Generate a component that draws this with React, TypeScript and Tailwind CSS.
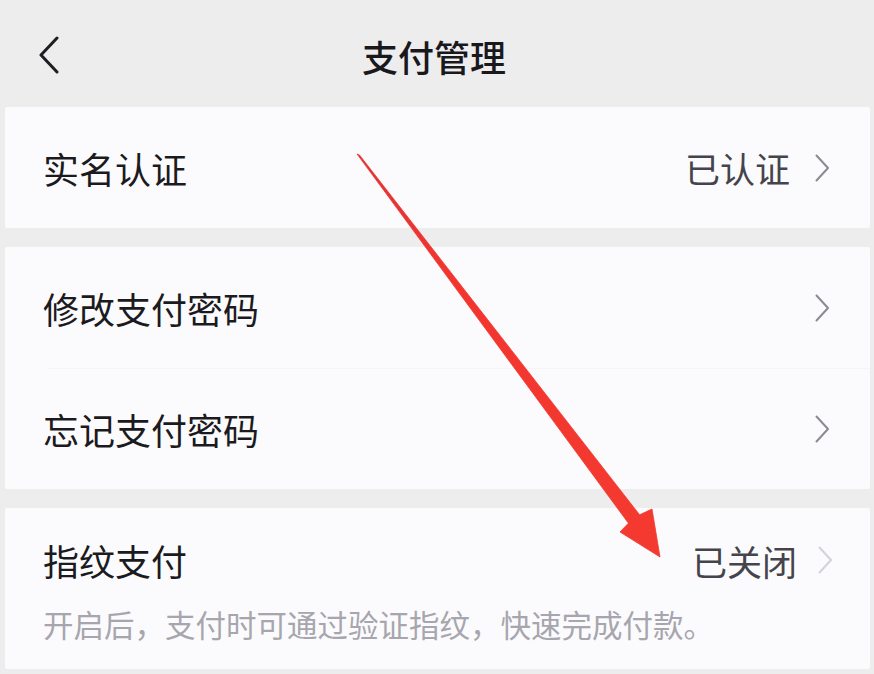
import React from "react";

const FONT = '"Noto Sans CJK SC", "Noto Sans", sans-serif';

function Chevron({ color = "#8a8a90" }: { color?: string }) {
  return (
    <svg width="15" height="28" viewBox="0 0 15 28" fill="none">
      <polyline points="1.5,1.5 13,14 1.5,26.5" stroke={color} strokeWidth="2" strokeLinecap="round" strokeLinejoin="round" />
    </svg>
  );
}

function Row({
  label,
  value,
  chevronColor,
  className = "h-[121px]",
}: {
  label: string;
  value?: string;
  chevronColor?: string;
  className?: string;
}) {
  return (
    <div className={`flex items-center pl-[38px] pr-[40px] ${className}`}>
      <span className="flex-1 text-[36px] leading-none text-[#1b1a20]">{label}</span>
      {value && <span className="text-[35px] leading-none text-[#45444c] mr-[25px]">{value}</span>}
      <Chevron color={chevronColor} />
    </div>
  );
}

export default function App() {
  return (
    <div className="relative w-[874px] h-[674px] overflow-hidden bg-[#ededee]" style={{ fontFamily: FONT }}>
      <header className="grid grid-cols-[1fr_auto_1fr] items-center h-[107px]">
        <div className="pl-[38px] pt-[2px]">
          <svg width="22" height="38" viewBox="0 0 22 38" fill="none">
            <polyline points="19,2 3,19 19,36" stroke="#1e1e22" strokeWidth="3" strokeLinecap="round" strokeLinejoin="round" />
          </svg>
        </div>
        <h1 className="text-[36px] font-medium leading-none text-[#19181d] pt-[4px] pr-[6px]">支付管理</h1>
        <div />
      </header>

      <section className="ml-[5px] mr-[4px] bg-[#fbfbfd] rounded-[2px]">
        <Row label="实名认证" value="已认证" />
      </section>

      <section className="ml-[5px] mr-[4px] mt-[19px] bg-[#fbfbfd] rounded-[2px]">
        <Row label="修改支付密码" />
        <div className="ml-[42px] h-px bg-[#f5f5f8]" />
        <Row label="忘记支付密码" className="h-[120px]" />
      </section>

      <section className="ml-[5px] mr-[4px] mt-[19px] bg-[#fbfbfd] rounded-[2px] pb-[33px]">
        <div className="flex items-center h-[104px] pl-[38px] pr-[37px]">
          <span className="flex-1 text-[36px] leading-none text-[#1b1a20]">指纹支付</span>
          <span className="text-[35px] leading-none text-[#45444c] mr-[21px]">已关闭</span>
          <Chevron color="#d2d2d8" />
        </div>
        <p className="pl-[38px] text-[30.5px] leading-[24px] text-[#a7a6ae]">
          开启后，支付时可通过验证指纹，快速完成付款。
        </p>
      </section>

      <svg
        className="absolute inset-0 pointer-events-none"
        width="874"
        height="674"
        viewBox="0 0 874 674"
      >
        <defs>
          <linearGradient id="arrowGrad" x1="0" y1="0" x2="1" y2="1">
            <stop offset="0" stopColor="#d8343a" />
            <stop offset="0.3" stopColor="#f2352f" />
            <stop offset="1" stopColor="#f43a30" />
          </linearGradient>
        </defs>
        <polygon
          points="357,154 359.5,155 639.6,514.8 652,509 660,557 620,532 628.4,523.2"
          fill="url(#arrowGrad)"
          stroke="#f43a30"
          strokeWidth="0.8"
          strokeLinejoin="round"
        />
      </svg>
    </div>
  );
}
